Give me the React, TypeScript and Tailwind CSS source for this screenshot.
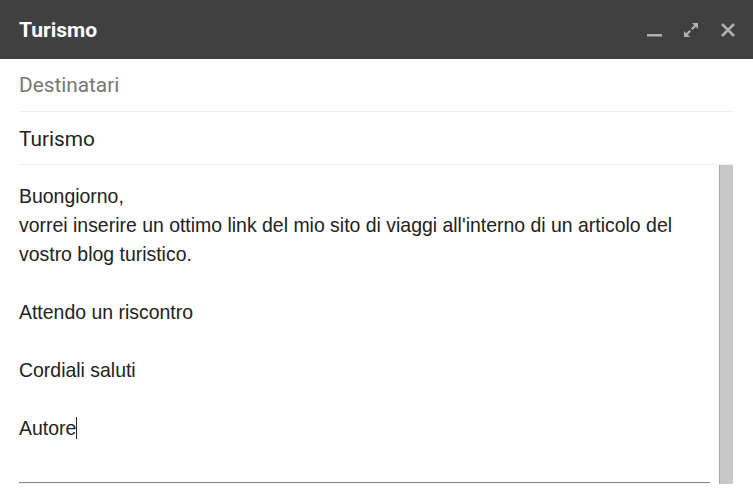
import React from 'react';

export default function App() {
  return (
    <div className="w-[753px] h-[504px] bg-white overflow-hidden flex flex-col">
      {/* Title bar */}
      <div className="h-[59px] bg-[#404040] flex items-center justify-between pl-[19px] pr-[17px] shrink-0">
        <span className="text-white text-[21px] font-bold font-['Roboto',sans-serif] pt-[2px]">Turismo</span>
        <div className="flex items-center gap-[21px] text-[#b0b0b0] pt-[1px]">
          <svg width="16" height="16" viewBox="0 0 16 16" aria-hidden="true">
            <rect x="0" y="12" width="15" height="2.5" fill="currentColor" />
          </svg>
          <svg width="16" height="16" viewBox="0 0 16 16" aria-hidden="true" className="-ml-[1px]">
            <path d="M9 1h6v6l-2.2-2.2-3.2 3.2-1.6-1.6 3.2-3.2z" fill="currentColor" />
            <path d="M7 15H1V9l2.2 2.2 3.2-3.2 1.6 1.6-3.2 3.2z" fill="currentColor" />
          </svg>
          <svg width="16" height="16" viewBox="0 0 16 16" aria-hidden="true">
            <path d="M2 2l12 12M14 2L2 14" stroke="currentColor" strokeWidth="2.6" />
          </svg>
        </div>
      </div>

      {/* Recipients */}
      <div className="mx-[19px] h-[53px] flex items-center border-b border-[#efefef] shrink-0">
        <span className="text-[20.8px] text-[#777] font-['Roboto',sans-serif] pt-[2px]">Destinatari</span>
      </div>

      {/* Subject */}
      <div className="mx-[19px] h-[53px] flex items-center border-b border-[#efefef] shrink-0">
        <span className="text-[20.8px] text-[#222] font-['Roboto',sans-serif] pt-[3px]">Turismo</span>
      </div>

      {/* Body + scrollbar */}
      <div className="flex pr-[20px]">
        <div className="flex-1 pl-[19px] pr-[9px]">
          <div className="h-[317px] pt-[17px] text-[19.45px] leading-[29px] text-[#222] font-['Liberation_Sans',Arial,sans-serif]">
            <p>Buongiorno,</p>
            <p>vorrei inserire un ottimo link del mio sito di viaggi all'interno di un articolo del vostro blog turistico.</p>
            <p className="h-[29px]" />
            <p>Attendo un riscontro</p>
            <p className="h-[29px]" />
            <p>Cordiali saluti</p>
            <p className="h-[29px]" />
            <p>
              Autore<span className="inline-block w-px h-[22px] bg-[#222] align-[-4px]" />
            </p>
          </div>
          <div className="border-t border-[#8a8a8a]" />
          <div className="border-t border-[#f0f0f0] w-[688px]" />
        </div>
        <div className="w-[14px] h-[319px] bg-[#c8c8c8] border-l border-[#a8a8a8]" />
      </div>
    </div>
  );
}
